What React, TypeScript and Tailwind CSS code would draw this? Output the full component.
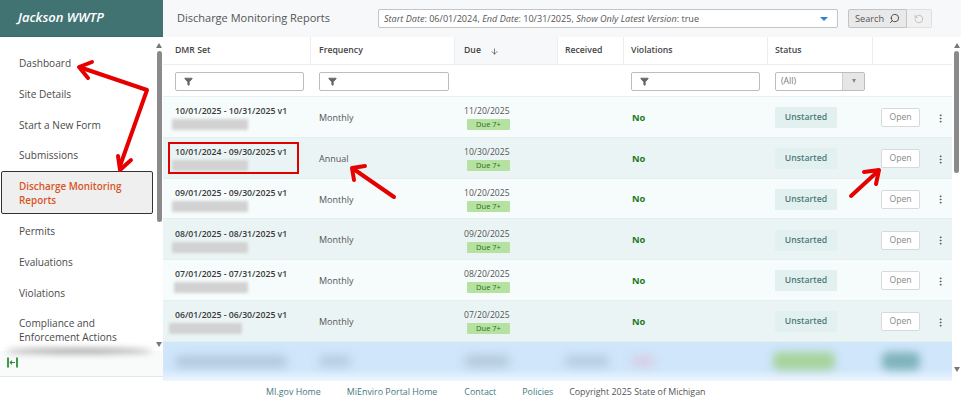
import { Filter, Search, RotateCcw, EllipsisVertical, ArrowDown } from "lucide-react";

const NAV_ITEMS = [
  { label: "Dashboard", h: "h-[31px]" },
  { label: "Site Details", h: "h-[31px]" },
  { label: "Start a New Form", h: "h-[30.5px]" },
  { label: "Submissions", h: "h-[29.5px]" },
];

const NAV_ITEMS_BELOW = [
  { label: "Permits", h: "h-[31px]" },
  { label: "Evaluations", h: "h-[31px]" },
  { label: "Violations", h: "h-[31px]" },
];

const ROWS = [
  { set: "10/01/2025 - 10/31/2025 v1", freq: "Monthly", due: "11/20/2025", blur: "w-[76px] ml-[-3px]" },
  { set: "10/01/2024 - 09/30/2025 v1", freq: "Annual", due: "10/30/2025", blur: "w-[76px] ml-[-3px]" },
  { set: "09/01/2025 - 09/30/2025 v1", freq: "Monthly", due: "10/20/2025", blur: "w-[76px] ml-[-3px]" },
  { set: "08/01/2025 - 08/31/2025 v1", freq: "Monthly", due: "09/20/2025", blur: "w-[76px] ml-[-3px]" },
  { set: "07/01/2025 - 07/31/2025 v1", freq: "Monthly", due: "08/20/2025", blur: "w-[74px] ml-[-1px]" },
  { set: "06/01/2025 - 06/30/2025 v1", freq: "Monthly", due: "07/20/2025", blur: "w-[73px] ml-[-6px]" },
];

const COLS = "grid grid-cols-[148px_144px_103px_66px_144px_105px_79px]";

function FilterInput({ width }: { width: string }) {
  return (
    <div className={`flex h-[19px] items-center rounded-[2px] border border-[#bdbdbd] bg-white pl-2 ${width}`}>
      <Filter size={9} className="fill-[#666] text-[#666]" />
    </div>
  );
}

function ScrollArrow({ down }: { down?: boolean }) {
  return (
    <div
      className={`h-0 w-0 border-x-[3.5px] border-x-transparent ${
        down ? "border-t-[5px] border-t-[#777]" : "border-b-[5px] border-b-[#777]"
      }`}
    />
  );
}

export default function App() {
  return (
    <div className="relative h-[404px] w-[965px] overflow-hidden bg-white font-['Open_Sans',sans-serif] text-[#444]">
      <div className="flex h-[381px] w-[961px]">
        {/* Sidebar */}
        <aside className="flex h-full w-[163px] shrink-0 flex-col bg-white">
          <div className="flex h-[37px] shrink-0 items-center border-b border-[#3a6b6b] bg-[#427373] pb-[1px] pl-[18px] text-[13px] font-semibold italic text-white">
            Jackson WWTP
          </div>
          <div className="relative flex h-[314px] shrink-0">
            <nav className="flex w-[155px] flex-col pt-[11px] text-[10.1px] leading-[14.5px] text-[#4a4a4a]">
              {NAV_ITEMS.map((item) => (
                <div key={item.label} className={`flex items-center pl-[19px] ${item.h}`}>
                  {item.label}
                </div>
              ))}
              <div className="mt-[1px] ml-[1px] mb-[1.5px] flex h-[43px] w-[152px] items-center rounded-[2px] border border-[#333] bg-[#efefef] pl-[17px] pt-[1px] text-[9.9px] font-semibold text-[#d9541e]">
                Discharge Monitoring
                <br />
                Reports
              </div>
              {NAV_ITEMS_BELOW.map((item) => (
                <div key={item.label} className={`flex items-center pl-[19px] ${item.h}`}>
                  {item.label}
                </div>
              ))}
              <div className="pl-[19px] pt-[7px]">
                Compliance and
                <br />
                Enforcement Actions
              </div>
            </nav>
            <div className="flex w-[8px] flex-col items-center pt-[6px]">
              <ScrollArrow />
              <div className="mt-[3px] h-[171px] w-[5px] rounded-full bg-[#8a8a8a]" />
              <div className="mt-auto mb-[4px]">
                <ScrollArrow down />
              </div>
            </div>
            <div className="absolute bottom-[-3px] left-[6px] h-[6px] w-[146px] rounded-[50%] bg-[#aaa] blur-[3px]" />
          </div>
          <div className="flex h-[26px] shrink-0 items-center border-b border-[#e6e6e6] bg-[#f9fafa] pb-[2px] pl-[7px]">
            <svg width="11" height="11" viewBox="0 0 11 11" fill="none" stroke="#2e8b3d">
              <path d="M1 0.5V10.5" strokeWidth="1.8" />
              <path d="M10 0.5V10.5" strokeWidth="1.8" />
              <path d="M8 5.5H3.2M5 3.7L3.2 5.5L5 7.3" strokeWidth="1.1" />
            </svg>
          </div>
        </aside>

        {/* Main */}
        <main className="flex min-w-0 flex-1 flex-col">
          <header className="flex h-[37px] shrink-0 items-center bg-[#f6f8f9] pl-[14px]">
            <h1 className="w-[201px] text-[11px] text-[#555]">Discharge Monitoring Reports</h1>
            <div className="flex h-[19px] w-[460px] items-center justify-between rounded-[2px] border border-[#c4c4c4] bg-white pl-[5px] pr-[9px] text-[9.1px] text-[#555]">
              <span>
                <i>Start Date</i>: 06/01/2024, <i>End Date</i>: 10/31/2025, <i>Show Only Latest Version</i>: true
              </span>
              <span className="h-0 w-0 border-x-[4px] border-t-[4px] border-x-transparent border-t-[#2f80d0]" />
            </div>
            <div className="ml-[10px] flex h-[19px] w-[59px] items-center justify-center gap-[5px] rounded-l-[2px] border border-[#c4c4c4] bg-[#e9e9e9] text-[9.2px] text-[#555]">
              Search
              <Search size={11} className="-scale-x-100 text-[#444]" />
            </div>
            <div className="flex h-[19px] w-[25px] items-center justify-center rounded-r-[2px] border border-l-0 border-[#dfdfdf] bg-[#f1f1f1]">
              <RotateCcw size={10} className="text-[#bbb]" />
            </div>
          </header>

          <div className="flex min-h-0 flex-1">
            <div className="flex w-[789px] flex-col">
              {/* Table head */}
              <div className={`${COLS} h-[28px] shrink-0 border-b border-[#ededed] bg-white text-[8.7px] font-semibold text-[#444]`}>
                <div className="flex items-center border-r border-[#ededed] pl-[12px] pt-[1px]">DMR Set</div>
                <div className="flex items-center border-r border-[#ededed] pl-[8px] pt-[1px]">Frequency</div>
                <div className="flex items-center gap-[9px] border-r border-[#ededed] bg-[#f6f8f9] pl-[9px] pt-[1px]">
                  Due
                  <ArrowDown size={9} className="text-[#555]" />
                </div>
                <div className="flex items-center border-r border-[#ededed] pl-[7px] pt-[1px]">Received</div>
                <div className="flex items-center border-r border-[#ededed] pl-[7px] pt-[1px]">Violations</div>
                <div className="flex items-center border-r border-[#ededed] pl-[7px] pt-[1px]">Status</div>
                <div />
              </div>

              {/* Filters */}
              <div className={`${COLS} h-[32px] shrink-0 items-center border-b border-[#e9f0f0] bg-white pt-[1px]`}>
                <div className="pl-[12px]">
                  <FilterInput width="w-[129px]" />
                </div>
                <div className="pl-[8px]">
                  <FilterInput width="w-[130px]" />
                </div>
                <div />
                <div />
                <div className="pl-[7px]">
                  <FilterInput width="w-[129px]" />
                </div>
                <div className="pl-[7px]">
                  <div className="flex h-[19px] w-[90px] items-center rounded-[2px] border border-[#bdbdbd] bg-white text-[8.7px] text-[#777]">
                    <span className="flex-1 pl-[5px] pt-[1px]">(All)</span>
                    <span className="flex h-full w-[22px] items-center justify-center border-l border-[#ccc] bg-[#e6e6e6]">
                      <span className="h-0 w-0 border-x-[2.5px] border-t-[4px] border-x-transparent border-t-[#888]" />
                    </span>
                  </div>
                </div>
                <div />
              </div>

              {/* Rows */}
              {ROWS.map((row, i) => (
                <div
                  key={row.set}
                  className={`${COLS} h-[40.75px] shrink-0 items-center border-b border-[#e6efef] pt-[2px] ${
                    i % 2 === 0 ? "bg-[#f6fbfb]" : "bg-[#ebf4f4]"
                  }`}
                >
                  <div className="pl-[12px]">
                    <div className="text-[8.7px] font-semibold leading-[13px] text-[#3a3a3a]">{row.set}</div>
                    <div className={`mt-[1px] h-[11px] rounded-[1px] bg-[#d2d2d2] blur-[1.5px] ${row.blur}`} />
                  </div>
                  <div className="pl-[8px] text-[9px] text-[#555]">{row.freq}</div>
                  <div className="flex flex-col pl-[9px]">
                    <span className="text-[8.6px] leading-[13px] text-[#555]">{row.due}</span>
                    <span className="ml-[3px] mt-[1px] flex h-[11px] w-[43px] items-center justify-center rounded-[1px] bg-[#b5e2a0] text-[7.5px] text-[#2f6b1f]">
                      Due 7+
                    </span>
                  </div>
                  <div />
                  <div className="pl-[8px] text-[9.3px] font-bold text-[#1d7a1d]">No</div>
                  <div className="pl-[7px]">
                    <div className="flex h-[21px] w-[62px] items-center justify-center rounded-[1px] bg-[#e2f0f0] text-[8.7px] font-semibold text-[#4b7a7a]">
                      Unstarted
                    </div>
                  </div>
                  <div className="flex items-center pl-[8px]">
                    <div className="flex h-[19px] w-[39px] items-center justify-center rounded-[2px] border border-[#d5dada] bg-white text-[8.6px] text-[#888]">
                      Open
                    </div>
                    <EllipsisVertical size={11} className="ml-[15px] mt-[1px] text-[#555]" />
                  </div>
                </div>
              ))}

              {/* Row covered by blur */}
              <div className={`${COLS} min-h-0 flex-1 items-center overflow-hidden bg-gradient-to-b from-[#cfe6fb] from-70% to-[#eef6fd]`}>
                <div className="pl-[12px]">
                  <div className="h-[11px] w-[112px] rounded-full bg-[#b0c6da] blur-[5px]" />
                </div>
                <div className="pl-[8px]">
                  <div className="h-[10px] w-[32px] rounded-full bg-[#b4c9db] blur-[5px]" />
                </div>
                <div className="pl-[9px]">
                  <div className="h-[12px] w-[46px] rounded-full bg-[#b4c9db] blur-[5px]" />
                </div>
                <div className="pl-[7px]">
                  <div className="h-[10px] w-[44px] rounded-full bg-[#b4c9db] blur-[5px]" />
                </div>
                <div className="pl-[7px]">
                  <div className="h-[10px] w-[24px] rounded-full bg-[#d8cce2] blur-[5px]" />
                </div>
                <div className="pl-[5px]">
                  <div className="h-[18px] w-[62px] rounded-[6px] bg-[#a7d39c] blur-[4px]" />
                </div>
                <div className="pl-[9px]">
                  <div className="h-[18px] w-[38px] rounded-[6px] bg-[#7fb3bb] blur-[4px]" />
                </div>
              </div>
            </div>

            {/* Table scrollbar */}
            <div className="flex w-[9px] flex-col items-center bg-white pt-[6px]">
              <ScrollArrow />
              <div className="mt-[3px] h-[122px] w-[5px] rounded-full bg-[#8a8a8a]" />
              <div className="mt-auto mb-[9px]">
                <ScrollArrow down />
              </div>
            </div>
          </div>
        </main>
      </div>

      {/* Footer */}
      <footer className="flex h-[23px] items-center pb-[2px] pl-[266px] text-[8.9px] text-[#3f7a80]">
        <span>MI.gov Home</span>
        <span className="ml-[26px]">MiEnviro Portal Home</span>
        <span className="ml-[27px]">Contact</span>
        <span className="ml-[26px]">Policies</span>
        <span className="ml-[16px] text-[#555]">Copyright 2025 State of Michigan</span>
      </footer>

      {/* Red annotations */}
      <div className="absolute left-[168px] top-[142px] h-[32px] w-[131px] border-2 border-[#e00000]" />
      <svg className="absolute left-0 top-0" width="965" height="404" viewBox="0 0 965 404" fill="none" stroke="#e60000" strokeWidth="4" strokeLinecap="round" strokeLinejoin="round">
        <path d="M120 166L147 90L82 68" />
        <path d="M92 62L79 67L88 78" />
        <path d="M118 156L120 170L131 160" />
        <path d="M394 197L355 170" />
        <path d="M354 180L352 168L365 166" />
        <path d="M851 196L876 173" />
        <path d="M864 172L879 170L876 184" />
      </svg>
    </div>
  );
}
